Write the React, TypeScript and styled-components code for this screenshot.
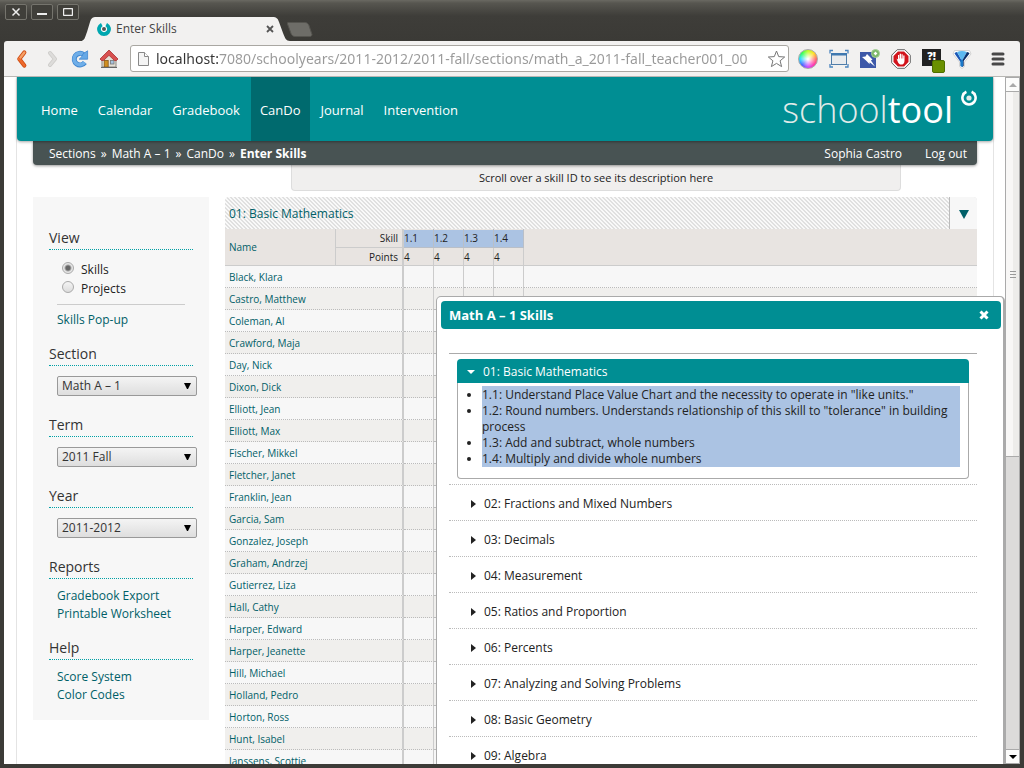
import React, { ReactNode } from "react";
import styled, { createGlobalStyle, css } from "styled-components";

const teal = "#008e93";
const linkColor = "#006068";
const uiFont = `"Open Sans", "Noto Sans", sans-serif`;

const GlobalStyle = createGlobalStyle`
  * { box-sizing: border-box; }
  html, body { margin: 0; height: 100%; overflow: hidden; }
  body { font-family: ${uiFont}; font-size: 12px; line-height: 16px; color: #222; background: #3c3b37; }
  button, input, select { font: inherit; color: inherit; margin: 0; padding: 0; }
  button { border: 0; background: none; cursor: pointer; }
  a { text-decoration: none; color: inherit; }
  h1, h2, ul { margin: 0; padding: 0; font-weight: 400; }
  ul { list-style: none; }
  svg { display: block; }
`;

/* ---------- window and browser chrome ---------- */

const Window = styled.div`
  display: flex;
  flex-direction: column;
  height: 100vh;
  padding: 0 4px 4px;
  background: #3c3b37;
`;

const TitleBar = styled.header`
  display: flex;
  flex: none;
  align-items: flex-end;
  height: 41px;
  margin: 0 -4px;
  background: linear-gradient(#6a6962 0, #575650 3px, #3e3d39 16px, #3b3a36 100%);
`;

const WindowButtons = styled.div`
  display: flex;
  align-self: flex-start;
  gap: 4px;
  padding: 4px 3px 0 5px;
`;

const WindowButton = styled.button`
  display: flex;
  align-items: center;
  justify-content: center;
  width: 22px;
  height: 16px;
  border: 1px solid #75746d;
  border-radius: 2px;
  background: #403f3a;
`;

const Tab = styled.div`
  position: relative;
  display: flex;
  align-items: center;
  width: 204px;
  height: 24px;
  padding: 0 12px 0 15px;
  gap: 5px;
  color: #444;
`;

const TabShape = styled.svg`
  position: absolute;
  inset: 0;
  z-index: 0;
`;

const TabTitle = styled.span`
  position: relative;
  flex: 1;
`;

const TabIcon = styled.span`
  position: relative;
`;

const TabClose = styled.button`
  position: relative;
`;

const NewTab = styled.button`
  align-self: flex-end;
  padding: 0 0 4px 1px;
`;

const Toolbar = styled.div`
  display: flex;
  flex: none;
  align-items: center;
  height: 36px;
  padding: 0 12px 0 8px;
  gap: 9px;
  background: #f2f1f0;
  border-bottom: 1px solid #b8b7b4;
  border-radius: 3px 3px 0 0;
`;

const ToolButton = styled.button`
  display: flex;
  align-items: center;
  justify-content: center;
  width: 20px;
  height: 24px;
`;

const AddressBar = styled.div`
  display: flex;
  flex: 1;
  align-items: center;
  min-width: 0;
  height: 27px;
  padding: 0 2px 0 6px;
  margin-left: 2px;
  gap: 6px;
  border: 1px solid #a9a7a2;
  border-radius: 3px;
  background: #fff;
`;

const AddressInput = styled.input`
  flex: 1;
  min-width: 0;
  height: 23px;
  border: 0;
  outline: 0;
  font-family: "Noto Sans", sans-serif;
  font-size: 14px;
  color: transparent;
  background: linear-gradient(90deg, #333 62px, #999 62px);
  -webkit-background-clip: text;
  background-clip: text;
`;

const Extensions = styled.div`
  display: flex;
  align-items: center;
  gap: 11px;
  margin-right: 7px;
`;

const Body = styled.div`
  display: flex;
  flex: 1;
  min-height: 0;
`;

const Viewport = styled.div`
  position: relative;
  flex: 1;
  min-width: 0;
  overflow: hidden;
  background: #fff;
`;

const Scrollbar = styled.div`
  display: flex;
  flex-direction: column;
  width: 15px;
  border: solid #aaa;
  border-width: 0 1px;
  background: #dcdbda;
`;

const ScrollButton = styled.button`
  display: flex;
  align-items: center;
  justify-content: center;
  flex: none;
  height: 15px;
  border: solid #aaa;
  border-width: 1px 0;
  background: #fcfcfb;
`;

const ScrollThumb = styled.div`
  display: flex;
  align-items: center;
  justify-content: center;
  flex: 365;
  border-bottom: 1px solid #aaa;
  background: linear-gradient(90deg, #f8f7f6 50%, #edecea 50%);
`;

const ScrollTrack = styled.div`
  flex: 292;
`;

/* ---------- page ---------- */

const Page = styled.div`
  margin: 0 11px 0 12px;
  min-height: 100%;
  border: solid #e4e4e4;
  border-width: 0 1px;
`;

const PageHeader = styled.header`
  position: relative;
  z-index: 2;
  display: flex;
  justify-content: space-between;
  height: 64px;
  padding: 0 16px;
  border-radius: 0 0 4px 4px;
  background: ${teal};
  box-shadow: 0 1px 3px rgba(0, 0, 0, 0.35);
`;

const Nav = styled.nav`
  display: flex;
  gap: 2px;
  margin-left: -1px;
`;

const NavLink = styled.a<{ $active?: boolean }>`
  height: 64px;
  padding: 0 9px;
  font-size: 13px;
  line-height: 66px;
  color: #fff;
  background: ${(p) => (p.$active ? "#006a6e" : "transparent")};
`;

const Brand = styled.a`
  display: flex;
  align-items: flex-start;
  gap: 8px;
  padding-top: 13px;
  font-size: 36px;
  font-weight: 300;
  line-height: 40px;
  color: #e0ebe9;
`;

const BrandStrong = styled.span`
  font-weight: 400;
  color: #fff;
`;

const CrumbBar = styled.div`
  position: relative;
  z-index: 1;
  display: flex;
  align-items: center;
  justify-content: space-between;
  height: 24px;
  margin: 0 16px;
  padding: 2px 10px 0 16px;
  border-radius: 0 0 4px 4px;
  color: #fff;
  background: #485353;
  box-shadow: 0 1px 3px rgba(0, 0, 0, 0.4);
`;

const Crumbs = styled.nav`
  display: flex;
  gap: 5px;
`;

const CurrentCrumb = styled.strong`
  font-weight: 700;
`;

const Account = styled.div`
  display: flex;
  gap: 23px;
`;

const Hint = styled.div`
  margin: 0 92px 6px 274px;
  padding: 5px 0 4px;
  border: solid #ddd;
  border-width: 0 1px 1px;
  border-radius: 0 0 4px 4px;
  text-align: center;
  font-size: 11px;
  line-height: 16px;
  background: #f0efee;
`;

const Columns = styled.div`
  display: flex;
  align-items: flex-start;
  gap: 16px;
  padding: 0 16px;
`;

const Sidebar = styled.aside`
  flex: none;
  width: 176px;
  padding: 31px 16px 1px;
  background: #f7f7f7;
`;

const SideHeading = styled.h2`
  height: 22px;
  font-size: 14px;
  line-height: 20px;
  color: #333;
  border-bottom: 1px dotted #00a0a5;
`;

const sidePadding = {
  options: "10px 0 15px 8px",
  select: "10px 0 19px 8px",
  links: "8px 0 15px 8px",
};

const SideBody = styled.div<{ $kind: keyof typeof sidePadding }>`
  padding: ${(p) => sidePadding[p.$kind]};
`;

const RadioLabel = styled.label`
  display: flex;
  align-items: center;
  gap: 7px;
  height: 19px;
  padding-left: 5px;
`;

const Radio = styled.input`
  appearance: none;
  width: 12px;
  height: 12px;
  margin-bottom: 3px;
  border: 1px solid #aaa;
  border-radius: 50%;
  background: linear-gradient(#f4f4f4, #dcdcdc);
  &:checked {
    background: radial-gradient(circle, #666 2px, #e6e6e6 4px);
  }
`;

const Divider = styled.hr`
  margin: 6px 8px 6px 0;
  border: 0;
  border-top: 1px solid #ccc;
`;

const SideLink = styled.a`
  display: block;
  line-height: 18px;
  color: ${linkColor};
`;

const SelectBox = styled.div`
  position: relative;
  width: 140px;
`;

const Select = styled.select`
  appearance: none;
  display: block;
  width: 100%;
  height: 20px;
  padding: 0 4px;
  border: 1px solid #999;
  border-radius: 2px;
  line-height: 16px;
  color: #333;
  background: linear-gradient(#f4f4f4, #dedede);
`;

const SelectArrow = styled.svg`
  position: absolute;
  top: 7px;
  right: 6px;
  pointer-events: none;
`;

const Main = styled.main`
  flex: 1;
  min-width: 0;
`;

const GroupBar = styled.div`
  display: flex;
  height: 32px;
  border-radius: 4px 4px 0 0;
  overflow: hidden;
  background: linear-gradient(45deg, #e0e0e0 25%, #f9f9f9 25% 50%, #e0e0e0 50% 75%, #f9f9f9 75%) 0 0 / 4px 4px;
`;

const GroupLink = styled.a`
  flex: 1;
  padding-left: 4px;
  line-height: 34px;
  color: ${linkColor};
`;

const GroupMenu = styled.button`
  display: flex;
  align-items: center;
  justify-content: center;
  width: 28px;
  padding-top: 2px;
  border-left: 1px solid #bbb;
  background: #f7f7f7;
`;

const Grid = styled.table`
  width: 100%;
  table-layout: fixed;
  border-collapse: separate;
  border-spacing: 0;
  font-size: 10px;
  line-height: 16px;
`;

const Col = styled.col<{ $w?: number }>`
  width: ${(p) => (p.$w ? `${p.$w}px` : "auto")};
`;

const headCell = css`
  height: 18px;
  padding: 0;
  font-weight: 400;
  background: #e8e4e1;
  border-right: 1px solid #ccc;
`;

const NameHead = styled.th`
  ${headCell}
  padding-left: 4px;
  text-align: left;
  color: ${linkColor};
  border-bottom: 1px solid #ccc;
`;

const LabelHead = styled.th<{ $last?: boolean }>`
  ${headCell}
  height: ${(p) => (p.$last ? "18px" : "19px")};
  padding-right: 4px;
  text-align: right;
  border-right: 2px solid #ccc;
  border-bottom: 1px solid #ccc;
`;

const ValueHead = styled.th<{ $skill?: boolean }>`
  ${headCell}
  text-align: left;
  border-bottom: 1px solid #ccc;
  ${(p) => p.$skill && "background: #abc3e3; border-color: #b9bfc8; box-shadow: inset 0 1px #e8e4e1;"}
`;

const FillHead = styled.th`
  ${headCell}
  border-right: 0;
  border-bottom: 1px solid #ccc;
`;

const Row = styled.tr`
  background: #f7f7f7;
  &:nth-child(even) { background: #f0efed; }
`;

const Cell = styled.td<{ $edge?: number }>`
  height: 22px;
  padding: 0 4px;
  border-bottom: 1px dotted #bbb;
  border-right: ${(p) => p.$edge || 0}px solid #ccc;
`;

const NameLink = styled.a`
  color: ${linkColor};
`;

/* ---------- skills dialog ---------- */

const Dialog = styled.section`
  position: absolute;
  z-index: 3;
  top: 219px;
  right: 0;
  bottom: -8px;
  width: 569px;
  padding: 4px 2px 0 4px;
  overflow: hidden;
  border: 1px solid #aaa;
  border-right-width: 2px;
  border-radius: 5px;
  background: #fff;
`;

const DialogHeader = styled.div`
  display: flex;
  align-items: center;
  justify-content: space-between;
  height: 28px;
  padding: 0 12px 0 8px;
  border-radius: 4px;
  color: #fff;
  background: ${teal};
`;

const DialogTitle = styled.h1`
  font-size: 13px;
  font-weight: 700;
`;

const Accordion = styled.div`
  margin: 24px 24px 0 8px;
  border-top: 1px solid #aaa;
`;

const OpenSection = styled.div`
  padding: 5px 8px;
  border-bottom: 1px dotted #bbb;
`;

const OpenHeader = styled.button`
  display: flex;
  align-items: center;
  gap: 8px;
  width: 100%;
  height: 24px;
  padding: 2px 0 0 10px;
  border-radius: 4px 4px 0 0;
  color: #fff;
  background: ${teal};
`;

const SkillPanel = styled.div`
  padding: 3px 8px 11px 24px;
  border: 1px solid #aaa;
  border-top: 0;
  border-radius: 0 0 4px 4px;
`;

const SkillList = styled.ul`
  padding-top: 1px;
  list-style: disc;
  background: #abc3e3;
`;

const ClosedHeader = styled.button`
  display: flex;
  align-items: center;
  gap: 8px;
  width: 100%;
  height: 36px;
  padding: 2px 0 0 22px;
  border-bottom: 1px dotted #bbb;
  text-align: left;
`;

/* ---------- icons ---------- */

const Favicon = () => (
  <svg width="14" height="14" viewBox="0 0 14 14" aria-hidden="true">
    <circle cx="7" cy="7" r="4" fill="#fff" />
    <path d="M4.800 2.600A5 5 0 1 0 9.200 2.600" fill="none" stroke="#00a7b0" strokeWidth="3.800" />
    <circle cx="7" cy="7" r="2" fill="#555" />
  </svg>
);

const BrandMark = () => (
  <svg width="16" height="16" viewBox="0 0 16 16" aria-hidden="true">
    <path d="M5.400 1.800A6.600 6.600 0 1 0 10.600 1.800" fill="none" stroke="#fff" strokeWidth="2.600" />
    <circle cx="8" cy="8" r="2.600" fill="#e0ebe9" />
  </svg>
);

const Triangle = ({ w, h, dir, color }: { w: number; h: number; dir: "up" | "down" | "right"; color: string }) => {
  const points = {
    up: `0,${h} ${w},${h} ${w / 2},0`,
    down: `0,0 ${w},0 ${w / 2},${h}`,
    right: `0,0 ${w},${h / 2} 0,${h}`,
  }[dir];
  return (
    <svg width={w} height={h} aria-hidden="true">
      <polygon points={points} fill={color} />
    </svg>
  );
};

const BackIcon = () => (
  <svg width="20" height="20" viewBox="0 0 20 20">
    <path d="M12.300 3.500L7.300 10l5 6.500" fill="none" stroke="#cf4d14" strokeWidth="4.200" strokeLinecap="round" strokeLinejoin="round" />
    <path d="M12.300 3.500L7.300 10" fill="none" stroke="#f5a066" strokeWidth="2.400" strokeLinecap="round" />
    <path d="M7.300 10l5 6.500" fill="none" stroke="#ee6a2c" strokeWidth="2.400" strokeLinecap="round" />
  </svg>
);

const ForwardIcon = () => (
  <svg width="20" height="20" viewBox="0 0 20 20">
    <path d="M9 4l5 6-5 6" fill="none" stroke="#cccbc8" strokeWidth="4" strokeLinecap="round" strokeLinejoin="round" />
    <path d="M9 4l5 6-5 6" fill="none" stroke="#dddcda" strokeWidth="2.400" strokeLinecap="round" strokeLinejoin="round" />
  </svg>
);

const ReloadIcon = () => (
  <svg width="20" height="20" viewBox="0 0 20 20">
    <path d="M13.500 5.500A5.800 5.800 0 1 0 14.800 13.500" fill="none" stroke="#4187d0" strokeWidth="5" />
    <path d="M13.500 5.500A5.800 5.800 0 1 0 14.600 13.300" fill="none" stroke="#6faee8" strokeWidth="3.400" />
    <path d="M17.600 1.800v8.400H9.200l2.800-2.800 1-2.600z" fill="#66a8e6" stroke="#4187d0" strokeWidth=".8" />
  </svg>
);

const HomeIcon = () => (
  <svg width="20" height="20" viewBox="0 0 20 20">
    <path d="M3 9L10 3.500 17 9v9H3z" fill="#e4e0d6" stroke="#8b8880" />
    <rect x="5.200" y="11.500" width="4" height="6.500" fill="#d08f20" stroke="#86591a" strokeWidth=".8" />
    <rect x="11.500" y="11.500" width="3.500" height="3.500" fill="#a5c2e0" stroke="#777" strokeWidth=".8" />
    <path d="M1 10L10 1l9 9-1.500 1.500h-2L10 6.300 4.500 11.500h-2z" fill="#d85050" stroke="#a83030" strokeWidth=".8" />
    <path d="M2 18.500h16" stroke="#666" />
  </svg>
);

const PageIcon = () => (
  <svg width="13" height="16" viewBox="0 0 13 16">
    <path d="M1.500 1.500h6l4 4v9h-10z" fill="#f4f4f4" stroke="#888" />
    <path d="M7.500 1.500v4h4" fill="#fff" stroke="#888" />
  </svg>
);

const StarIcon = () => (
  <svg width="19" height="18" viewBox="0 0 19 18">
    <path d="M9.500 1l2.200 5.600 6 .4-4.600 3.800 1.500 5.800-5.100-3.200-5.100 3.200 1.500-5.800L1.300 7l6-.4z" fill="#fff" stroke="#777" />
  </svg>
);

const ColorWheel = styled.span`
  width: 20px;
  height: 20px;
  border: 1px solid #aaa;
  border-radius: 50%;
  background: radial-gradient(circle, #fff 5%, rgba(255, 255, 255, 0) 65%),
    conic-gradient(from 90deg, #f66, #f3a, #c4f, #46f, #2df, #3f5, #bf2, #fd2, #f66);
`;

const CaptureIcon = () => (
  <svg width="20" height="20" viewBox="0 0 20 20">
    <path d="M1 4.500V1.500h3M16 1.500h3v3M19 15v3h-3M4 18H1v-3" fill="none" stroke="#4a84bd" strokeWidth="1.300" />
    <rect x="2.500" y="4.500" width="15" height="11" fill="#e9ebed" stroke="#4f7da9" />
    <rect x="2" y="4" width="16" height="2.500" fill="#3f78b0" />
  </svg>
);

const PinIcon = () => (
  <svg width="20" height="20" viewBox="0 0 20 20">
    <rect x="0" y="3" width="16" height="16" fill="#3d58a8" />
    <path d="M2 8l3.500-.5 1.500-2.500 5.500 5.500-2.500 1.500L9.500 15 6 11.500z" fill="#fff" />
    <path d="M8 12l2-2 5 7.500z" fill="#fff" />
    <circle cx="15.500" cy="4.500" r="4" fill="#79b765" stroke="#a6cf98" />
    <path d="M15.500 2.800v3.400M13.800 4.500h3.400" stroke="#fff" strokeWidth="1.400" />
  </svg>
);

const BlockIcon = () => (
  <svg width="20" height="20" viewBox="0 0 20 20">
    <path d="M6.200 .7h7.600l5.500 5.500v7.600l-5.500 5.500H6.200L.7 13.800V6.200z" fill="#fff" stroke="#666" />
    <path d="M6.900 2.500h6.200l4.400 4.400v6.200l-4.400 4.400H6.900l-4.400-4.400V6.900z" fill="#d2141c" />
    <path d="M5.500 9.500l1.500 1V6h1.200v3.500h.5V4.800H10v4.600h.5V5.200h1.200v4.300h.5V6.600h1.300V12c0 2.500-1.500 3.600-3.400 3.600-2 0-3-1.600-4.600-6.100z" fill="#fff" />
  </svg>
);

const Interrobang = styled.span`
  position: relative;
  width: 19px;
  height: 17px;
  margin-bottom: 2px;
  font-size: 11px;
  font-weight: 800;
  line-height: 14px;
  text-align: center;
  color: #fff;
  background: #222;
  &::after {
    content: "";
    position: absolute;
    right: -4px;
    bottom: -7px;
    width: 11px;
    height: 11px;
    border: 1px solid #4d7000;
    border-radius: 2px;
    background: #6a9000;
  }
`;

const FunnelIcon = () => (
  <svg width="20" height="20" viewBox="0 0 20 20">
    <path d="M2.500 1.500h15L19 5l-6.500 8v4.500L10 19.500 7.500 17.500V13L1 5z" fill="#fff" stroke="#d2d2d2" />
    <path d="M2.500 4.500Q3 3 5 3l5 9-1.500 1z" fill="#1b57b5" />
    <path d="M5 3q5-2 10 0l-5 9z" fill="#5cb8f0" />
    <path d="M17.500 4.500Q17 3 15 3L10 12v6l1.700-1v-5z" fill="#0b2f6b" />
    <path d="M8.300 12L10 10l1 2v5l-1 1-1.700-1z" fill="#1a78c8" />
  </svg>
);

const MenuIcon = () => (
  <svg width="14" height="14" viewBox="0 0 14 14">
    <path d="M2 2h10M2 7h10M2 12h10" stroke="#484848" strokeWidth="3" strokeLinecap="round" />
  </svg>
);

/* ---------- data ---------- */

const navItems = ["Home", "Calendar", "Gradebook", "CanDo", "Journal", "Intervention"];
const skills = ["1.1", "1.2", "1.3", "1.4"];
const students = [
  "Black, Klara", "Castro, Matthew", "Coleman, Al", "Crawford, Maja", "Day, Nick", "Dixon, Dick",
  "Elliott, Jean", "Elliott, Max", "Fischer, Mikkel", "Fletcher, Janet", "Franklin, Jean", "Garcia, Sam",
  "Gonzalez, Joseph", "Graham, Andrzej", "Gutierrez, Liza", "Hall, Cathy", "Harper, Edward",
  "Harper, Jeanette", "Hill, Michael", "Holland, Pedro", "Horton, Ross", "Hunt, Isabel", "Janssens, Scottie",
];
const skillTexts = [
  '1.1: Understand Place Value Chart and the necessity to operate in "like units."',
  '1.2: Round numbers. Understands relationship of this skill to "tolerance" in building process',
  "1.3: Add and subtract, whole numbers",
  "1.4: Multiply and divide whole numbers",
];
const closedSections = [
  "02: Fractions and Mixed Numbers", "03: Decimals", "04: Measurement", "05: Ratios and Proportion",
  "06: Percents", "07: Analyzing and Solving Problems", "08: Basic Geometry", "09: Algebra",
];

type SideSectionProps = { title: string; kind: keyof typeof sidePadding; children: ReactNode };

const SideSection = ({ title, kind, children }: SideSectionProps) => (
  <section>
    <SideHeading>{title}</SideHeading>
    <SideBody $kind={kind}>{children}</SideBody>
  </section>
);

const Picker = ({ label, value }: { label: string; value: string }) => (
  <SideSection title={label} kind="select">
    <SelectBox>
      <Select aria-label={label} defaultValue={value}>
        <option>{value}</option>
      </Select>
      <SelectArrow width="7" height="6" aria-hidden="true">
        <polygon points="0,0 7,0 4,6 3,6" fill="#000" />
      </SelectArrow>
    </SelectBox>
  </SideSection>
);

export default function App() {
  return (
    <Window>
      <GlobalStyle />
      <TitleBar>
        <WindowButtons>
          <WindowButton aria-label="Close window">
            <svg width="10" height="10"><path d="M1.500 1.500l7 7M8.500 1.500l-7 7" stroke="#eee" strokeWidth="1.500" /></svg>
          </WindowButton>
          <WindowButton aria-label="Minimize">
            <svg width="10" height="10"><path d="M0 7h10" stroke="#eee" strokeWidth="2" /></svg>
          </WindowButton>
          <WindowButton aria-label="Maximize">
            <svg width="10" height="8"><rect x=".5" y=".5" width="9" height="7" rx="1" fill="none" stroke="#eee" strokeWidth="1.400" /></svg>
          </WindowButton>
        </WindowButtons>
        <Tab>
          <TabShape width="208" height="24" viewBox="0 0 208 24" aria-hidden="true">
            <path d="M-2 24C3 24 3 20 5 15L8 5C9 1 11 0 14 0H190C195 0 196 2 197 5L201 16C203 21 204 24 208 24z" fill="#f2f1f0" />
          </TabShape>
          <TabIcon><Favicon /></TabIcon>
          <TabTitle>Enter Skills</TabTitle>
          <TabClose aria-label="Close tab">
            <svg width="8" height="8"><path d="M1 1l6 6M7 1L1 7" stroke="#555" strokeWidth="1.800" /></svg>
          </TabClose>
        </Tab>
        <NewTab aria-label="New tab">
          <svg width="26" height="15"><path d="M1 0.500h17c2 0 3 1 4 3l3 9c0 1-1 2-2 2H8c-2 0-3-1-4-3L.5 2c0-1 0-1.500.5-1.500z" fill="#6e6d68" stroke="#55544f" /></svg>
        </NewTab>
      </TitleBar>
      <Toolbar>
        <ToolButton aria-label="Back"><BackIcon /></ToolButton>
        <ToolButton aria-label="Forward"><ForwardIcon /></ToolButton>
        <ToolButton aria-label="Reload"><ReloadIcon /></ToolButton>
        <ToolButton aria-label="Home page"><HomeIcon /></ToolButton>
        <AddressBar>
          <PageIcon />
          <AddressInput
            aria-label="Address"
            defaultValue="localhost:7080/schoolyears/2011-2012/2011-fall/sections/math_a_2011-fall_teacher001_00"
          />
          <StarIcon />
        </AddressBar>
        <Extensions>
          <ColorWheel />
          <CaptureIcon />
          <PinIcon />
          <BlockIcon />
          <Interrobang>?!</Interrobang>
          <FunnelIcon />
        </Extensions>
        <ToolButton aria-label="Menu"><MenuIcon /></ToolButton>
      </Toolbar>
      <Body>
        <Viewport>
          <Page>
            <PageHeader>
              <Nav>
                {navItems.map((item) => (
                  <NavLink key={item} href="#" $active={item === "CanDo"}>{item}</NavLink>
                ))}
              </Nav>
              <Brand href="#">
                <span>school<BrandStrong>tool</BrandStrong></span>
                <BrandMark />
              </Brand>
            </PageHeader>
            <CrumbBar>
              <Crumbs>
                <a href="#">Sections</a><span>»</span>
                <a href="#">Math A – 1</a><span>»</span>
                <a href="#">CanDo</a><span>»</span>
                <CurrentCrumb>Enter Skills</CurrentCrumb>
              </Crumbs>
              <Account>
                <a href="#">Sophia Castro</a>
                <a href="#">Log out</a>
              </Account>
            </CrumbBar>
            <Hint>Scroll over a skill ID to see its description here</Hint>
            <Columns>
              <Sidebar>
                <SideSection title="View" kind="options">
                  <RadioLabel><Radio type="radio" name="view" defaultChecked />Skills</RadioLabel>
                  <RadioLabel><Radio type="radio" name="view" />Projects</RadioLabel>
                  <Divider />
                  <SideLink href="#">Skills Pop-up</SideLink>
                </SideSection>
                <Picker label="Section" value="Math A – 1" />
                <Picker label="Term" value="2011 Fall" />
                <Picker label="Year" value="2011-2012" />
                <SideSection title="Reports" kind="links">
                  <SideLink href="#">Gradebook Export</SideLink>
                  <SideLink href="#">Printable Worksheet</SideLink>
                </SideSection>
                <SideSection title="Help" kind="links">
                  <SideLink href="#">Score System</SideLink>
                  <SideLink href="#">Color Codes</SideLink>
                </SideSection>
              </Sidebar>
              <Main>
                <GroupBar>
                  <GroupLink href="#">01: Basic Mathematics</GroupLink>
                  <GroupMenu aria-label="Choose skill set">
                    <Triangle w={10} h={9} dir="down" color={linkColor} />
                  </GroupMenu>
                </GroupBar>
                <Grid>
                  <colgroup>
                    <Col $w={111} /><Col $w={68} />
                    {skills.map((s) => <Col key={s} $w={30} />)}
                    <Col />
                  </colgroup>
                  <thead>
                    <tr>
                      <NameHead rowSpan={2}>Name</NameHead>
                      <LabelHead>Skill</LabelHead>
                      {skills.map((s) => <ValueHead key={s} $skill>{s}</ValueHead>)}
                      <FillHead rowSpan={2} />
                    </tr>
                    <tr>
                      <LabelHead $last>Points</LabelHead>
                      {skills.map((s) => <ValueHead key={s}>4</ValueHead>)}
                    </tr>
                  </thead>
                  <tbody>
                    {students.map((name) => (
                      <Row key={name}>
                        <Cell colSpan={2} $edge={2}><NameLink href="#">{name}</NameLink></Cell>
                        {skills.map((s) => <Cell key={s} $edge={1} />)}
                        <Cell />
                      </Row>
                    ))}
                  </tbody>
                </Grid>
              </Main>
            </Columns>
          </Page>
          <Dialog role="dialog" aria-label="Math A – 1 Skills">
            <DialogHeader>
              <DialogTitle>Math A – 1 Skills</DialogTitle>
              <button aria-label="Close dialog">
                <svg width="10" height="10"><path d="M1.500 1.500l7 7M8.500 1.500l-7 7" stroke="#fff" strokeWidth="3" /></svg>
              </button>
            </DialogHeader>
            <Accordion>
              <OpenSection>
                <OpenHeader>
                  <Triangle w={8} h={4} dir="down" color="#fff" />
                  01: Basic Mathematics
                </OpenHeader>
                <SkillPanel>
                  <SkillList>
                    {skillTexts.map((t) => <li key={t}>{t}</li>)}
                  </SkillList>
                </SkillPanel>
              </OpenSection>
              {closedSections.map((s) => (
                <ClosedHeader key={s}>
                  <Triangle w={5} h={8} dir="right" color="#222" />
                  {s}
                </ClosedHeader>
              ))}
            </Accordion>
          </Dialog>
        </Viewport>
        <Scrollbar>
          <ScrollButton aria-label="Scroll up"><Triangle w={8} h={4} dir="up" color="#aaa" /></ScrollButton>
          <ScrollThumb>
            <svg width="6" height="7"><path d="M0 .5h6M0 3.500h6M0 6.500h6" stroke="#999" /></svg>
          </ScrollThumb>
          <ScrollTrack />
          <ScrollButton aria-label="Scroll down"><Triangle w={8} h={4} dir="down" color="#000" /></ScrollButton>
        </Scrollbar>
      </Body>
    </Window>
  );
}
